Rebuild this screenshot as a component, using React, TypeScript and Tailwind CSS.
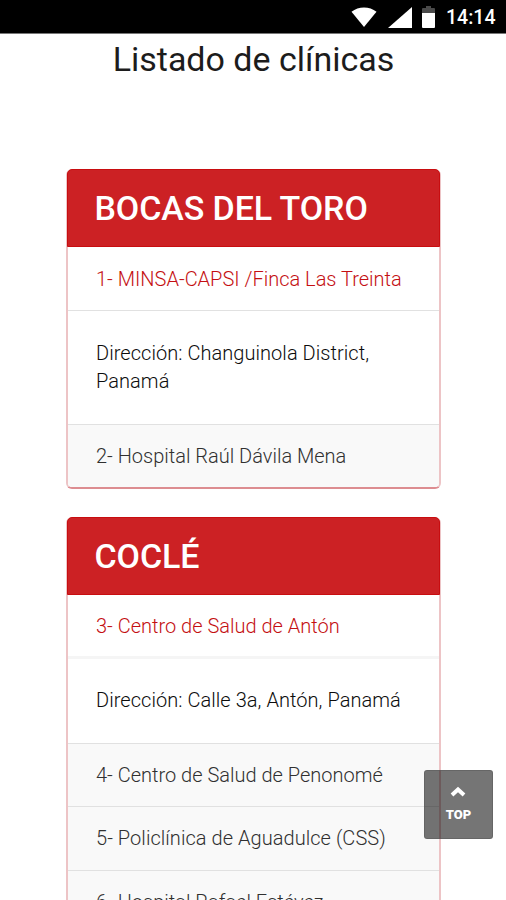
import React from "react";

type Entry = { text: string; kind: "open" | "address" | "closed"; box: string; rule?: string };
type Province = { name: string; entries: Entry[] };

const provinces: Province[] = [
  {
    name: "BOCAS DEL TORO",
    entries: [
      { text: "1- MINSA-CAPSI /Finca Las Treinta", kind: "open", box: "h-[63px] pt-[17.5px]" },
      { text: "Dirección: Changuinola District, Panamá", kind: "address", box: "h-[114px] pt-[28px]" },
      { text: "2- Hospital Raúl Dávila Mena", kind: "closed", box: "h-[63px] pt-[17px]" },
    ],
  },
  {
    name: "COCLÉ",
    entries: [
      { text: "3- Centro de Salud de Antón", kind: "open", box: "h-[61px] pt-[17px]" },
      {
        text: "Dirección: Calle 3a, Antón, Panamá",
        kind: "address",
        box: "h-[87px] pt-[27px]",
        rule: "border-t-[3px] border-[#f5f5f5]",
      },
      { text: "4- Centro de Salud de Penonomé", kind: "closed", box: "h-[63px] pt-[17px]" },
      { text: "5- Policlínica de Aguadulce (CSS)", kind: "closed", box: "h-[64px] pt-[17px] tracking-[0.05px]" },
      { text: "6- Hospital Rafael Estévez", kind: "closed", box: "h-[64px] pt-[17px]" },
    ],
  },
];

const tone = {
  open: "bg-white text-[#c40f12]",
  address: "bg-white text-[#0c0c0c] tracking-[0.05px]",
  closed: "bg-[#f9f9f9] text-[#303030]",
};

function StatusBar() {
  return (
    <header className="h-[34px] shrink-0 bg-black border-b border-[#777] flex items-start text-white">
      <svg className="ml-[351px] mt-[7px] shrink-0" width="26" height="21" viewBox="0 0 26 21" fill="#fff">
        <path d="M0.500 4.800C7.500 -1 18.500 -1 25.500 4.800L13 20Z" />
      </svg>
      <svg className="ml-[11px] mt-[7px] shrink-0" width="24" height="21" viewBox="0 0 24 21" fill="#fff">
        <path d="M24 0V21H0Z" />
      </svg>
      <svg className="ml-[10px] mt-[6px] shrink-0" width="13" height="22" viewBox="0 0 13 22">
        <path d="M4 0H9V2H12Q13 2 13 3V7.500H0V3Q0 2 1 2H4Z" fill="#4a4a4a" />
        <path d="M0 7H13V21Q13 22 12 22H1Q0 22 0 21Z" fill="#fff" />
      </svg>
      <span className="ml-[11px] mt-[4px] text-[19.5px] leading-[28px] font-medium whitespace-nowrap">14:14</span>
    </header>
  );
}

function ProvinceCard({ province }: { province: Province }) {
  return (
    <section className="w-[375px] rounded-[6px] border-x-2 border-b-2 border-x-[#edc4c6] border-b-[#dd8d91]">
      <h2 className="-mx-px h-[78px] rounded-t-[5px] border border-[#c80d10] bg-[#cc2124] pl-[26.5px] text-[34px] leading-[76px] font-medium tracking-[-0.1px] text-white whitespace-nowrap">
        {province.name}
      </h2>
      <ul className="overflow-hidden rounded-b-[4px]">
        {province.entries.map((entry, i) => (
          <li
            key={entry.text}
            className={`${entry.box} ${tone[entry.kind]} ${i ? entry.rule ?? "border-t border-[#e1e1e1]" : ""} px-[28px] text-[20px] leading-[28px] font-light`}
          >
            {entry.text}
          </li>
        ))}
      </ul>
    </section>
  );
}

export default function App() {
  return (
    <div className="relative flex h-[900px] w-[506px] flex-col overflow-hidden bg-white font-['Roboto',sans-serif]">
      <StatusBar />
      <h1 className="mt-[5px] h-[40px] shrink-0 pl-[1px] text-center text-[34px] leading-[40px] text-[#1c1c1c] whitespace-nowrap">
        Listado de clínicas
      </h1>
      <main className="mt-[90px] ml-[66px] flex shrink-0 flex-col gap-[28px]">
        {provinces.map((p) => (
          <ProvinceCard key={p.name} province={p} />
        ))}
      </main>
      <button className="absolute left-[424px] top-[770px] flex h-[69px] w-[69px] flex-col items-center rounded-[3px] border border-[#5c5c5c]/60 bg-black/54 text-white">
        <svg className="mt-[15px] mr-[2px]" width="16" height="11" viewBox="0 0 16 11" fill="none" stroke="#fff" strokeWidth="4">
          <path d="M2 9L8 3.500L14 9" />
        </svg>
        <span className="mt-[10px] text-[13px] leading-[16px] font-black">TOP</span>
      </button>
    </div>
  );
}
